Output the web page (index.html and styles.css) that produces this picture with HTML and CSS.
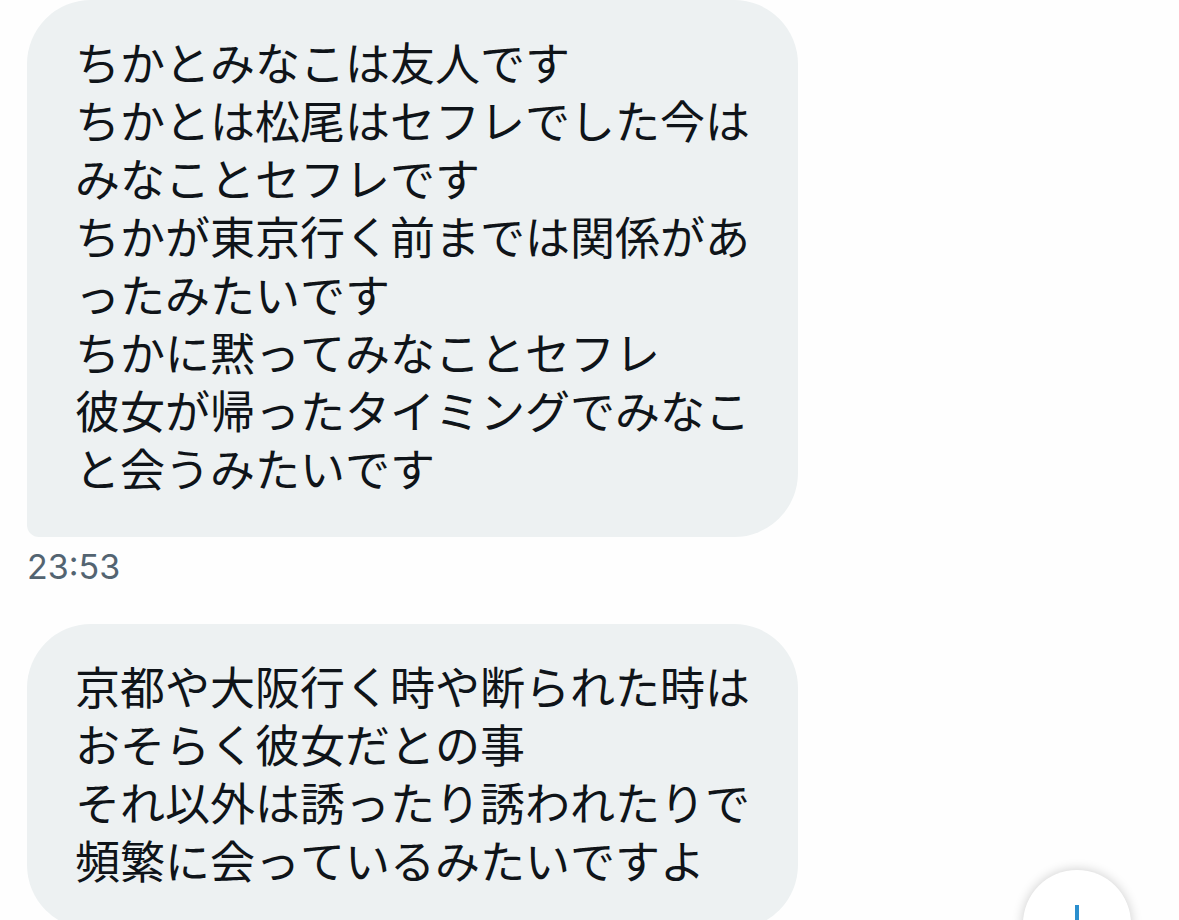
FILE: index.html
```html
<!DOCTYPE html>
<html lang="ja">
<head>
<meta charset="utf-8">
<meta name="viewport" content="width=device-width, initial-scale=1">
<title>メッセージ</title>
<link rel="stylesheet" href="styles.css">
</head>
<body>
<main class="chat">
  <article class="message">
    <div class="bubble bubble-last">
      <p class="line">ちかとみなこは友人です</p>
      <p class="line">ちかとは松尾はセフレでした今はみなことセフレです</p>
      <p class="line">ちかが東京行く前までは関係があったみたいです</p>
      <p class="line">ちかに黙ってみなことセフレ</p>
      <p class="line">彼女が帰ったタイミングでみなこと会うみたいです</p>
    </div>
    <time class="stamp" datetime="23:53">23:53</time>
  </article>
  <article class="message">
    <div class="bubble">
      <p class="line">京都や大阪行く時や断られた時はおそらく彼女だとの事</p>
      <p class="line">それ以外は誘ったり誘われたりで頻繁に会っているみたいですよ</p>
    </div>
  </article>
</main>
<button class="scroll-down" type="button" aria-label="最新のメッセージへ">
  <svg class="arrow" viewBox="0 0 48 48" aria-hidden="true"><path d="M24 5v36M8 26l16 16 16-16"/></svg>
</button>
</body>
</html>
```
FILE: styles.css
```css
* {
  box-sizing: border-box;
}

body {
  margin: 0;
  height: 100vh;
  overflow: hidden;
  background: #fefefe;
  color: #0f1419;
  font-family: Inter, "Noto Sans CJK JP", sans-serif;
}

.chat {
  display: flex;
  flex-direction: column;
  gap: 37px;
  padding: 0 27px;
}

.message {
  display: flex;
  flex-direction: column;
  align-items: flex-start;
}

.bubble {
  width: 771px;
  max-width: 100%;
  padding: 33px 48px 40px;
  border-radius: 64px;
  background: #edf1f2;
  font-family: "Noto Sans CJK JP", sans-serif;
  font-size: 45px;
  font-kerning: none;
  line-height: 58px;
  line-break: anywhere;
}

.bubble-last {
  border-bottom-left-radius: 12px;
}

.line {
  margin: 0;
}

.stamp {
  margin-top: 10px;
  color: #536471;
  font-size: 34px;
  line-height: 40px;
}

.scroll-down {
  position: fixed;
  right: 48px;
  bottom: -58px;
  display: grid;
  place-items: center;
  width: 108px;
  height: 108px;
  padding: 0;
  border: 0;
  border-radius: 50%;
  background: #fff;
  box-shadow: 0 0 12px rgba(0, 0, 0, 0.2);
}

.arrow {
  width: 48px;
  height: 48px;
  fill: none;
  stroke: #2b8fce;
  stroke-width: 4;
}
```
